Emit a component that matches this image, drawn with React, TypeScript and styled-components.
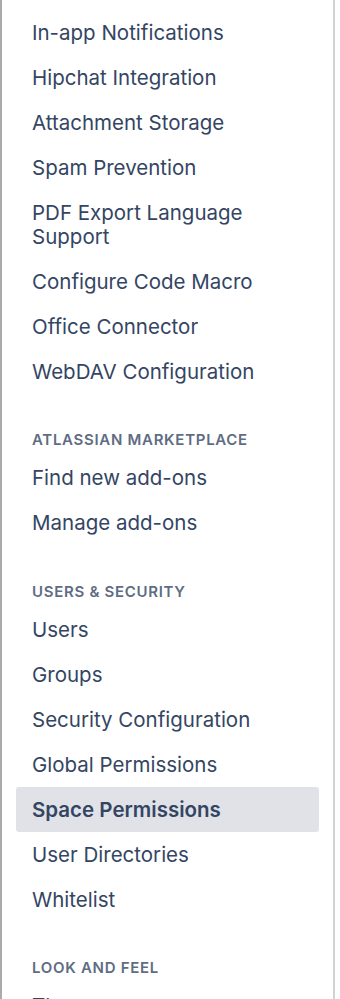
import styled, { createGlobalStyle } from "styled-components";

type NavItem = { label: string; selected?: boolean };
type NavSection = { title?: string; items: NavItem[] };

const sections: NavSection[] = [
  {
    items: [
      { label: "In-app Notifications" },
      { label: "Hipchat Integration" },
      { label: "Attachment Storage" },
      { label: "Spam Prevention" },
      { label: "PDF Export Language Support" },
      { label: "Configure Code Macro" },
      { label: "Office Connector" },
      { label: "WebDAV Configuration" },
    ],
  },
  {
    title: "Atlassian Marketplace",
    items: [{ label: "Find new add-ons" }, { label: "Manage add-ons" }],
  },
  {
    title: "Users & Security",
    items: [
      { label: "Users" },
      { label: "Groups" },
      { label: "Security Configuration" },
      { label: "Global Permissions" },
      { label: "Space Permissions", selected: true },
      { label: "User Directories" },
      { label: "Whitelist" },
    ],
  },
  {
    title: "Look and Feel",
    items: [{ label: "Themes" }, { label: "Color Scheme" }],
  },
];

const GlobalStyle = createGlobalStyle`
  html, body {
    margin: 0;
    padding: 0;
    background: #ffffff;
  }
  body {
    font-family: Inter, "Liberation Sans", Arial, sans-serif;
    -webkit-font-smoothing: antialiased;
  }
`;

const Page = styled.div`
  display: flex;
  height: 999px;
  overflow: hidden;
`;

const Sidebar = styled.nav`
  flex: none;
  width: 303px;
  border-left: 2px solid #ababab;
  border-right: 2px solid #d2d2d2;
  padding: 10px 14px 0;
`;

const Section = styled.div`
  display: flex;
  flex-direction: column;
`;

const Heading = styled.h3`
  margin: 38px 0 7.5px;
  padding: 0 16px;
  font-size: 15px;
  line-height: 16px;
  font-weight: 600;
  letter-spacing: 0.7px;
  text-transform: uppercase;
  color: #5e6c84;
`;

const Item = styled.a<{ $selected?: boolean }>`
  display: block;
  padding: 10.5px 16px;
  font-size: 20.5px;
  line-height: 24px;
  font-weight: ${(p) => (p.$selected ? 600 : 400)};
  color: #344563;
  text-decoration: none;
  border-radius: 3px;
  background: ${(p) => (p.$selected ? "#e0e2e7" : "transparent")};
  cursor: pointer;
`;

export default function App() {
  return (
    <>
      <GlobalStyle />
      <Page>
        <Sidebar>
          {sections.map((s, i) => (
            <Section key={i}>
              {s.title && <Heading>{s.title}</Heading>}
              {s.items.map((it) => (
                <Item key={it.label} $selected={it.selected}>
                  {it.label}
                </Item>
              ))}
            </Section>
          ))}
        </Sidebar>
      </Page>
    </>
  );
}
